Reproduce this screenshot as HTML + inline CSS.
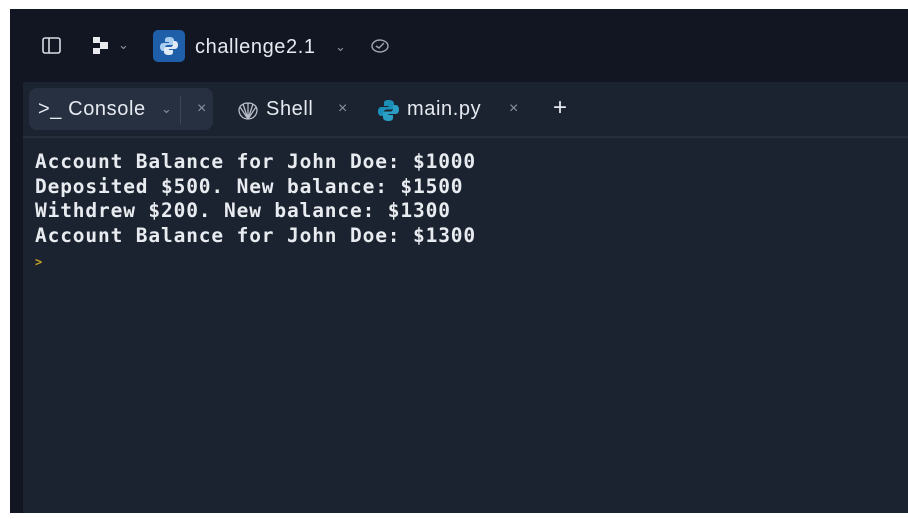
<!DOCTYPE html>
<html><head><style>
body{margin:0;width:908px;height:519px;background:#fff;overflow:hidden;position:relative;font-family:"Liberation Sans",sans-serif}
.app{position:absolute;left:10px;top:9px;width:898px;height:504px;background:#121622}
.top{position:absolute;left:0;top:0;width:898px;height:73px;background:#121622}
.main{position:absolute;left:13px;top:73px;right:0;bottom:0;background:#1b2330}
.tabs{position:absolute;left:0;top:0;right:0;height:54px;border-bottom:2px solid #262d3d}
.pill{position:absolute;left:6px;top:6px;width:184px;height:42px;background:#263041;border-radius:8px}
.t{position:absolute;color:#e6e9ef;font-size:20px;letter-spacing:0.6px}
.g{color:#8a93a3;letter-spacing:0}
pre{position:absolute;left:12px;top:68px;margin:0;font-family:"DejaVu Sans Mono",monospace;font-weight:bold;font-size:19.5px;line-height:24.5px;color:#e8ebef;letter-spacing:0.86px}
</style></head><body>
<div class="app">
 <div class="top">
  <svg style="position:absolute;left:32px;top:27px" width="20" height="20"><rect x="1" y="2" width="17" height="15" rx="2" fill="none" stroke="#d8dbe2" stroke-width="1.6"/><line x1="7" y1="2" x2="7" y2="17" stroke="#d8dbe2" stroke-width="1.6"/></svg>
  <svg style="position:absolute;left:82px;top:27px" width="20" height="20"><rect x="1" y="1" width="7" height="6" fill="#e8eaee"/><rect x="8" y="6" width="8" height="7" fill="#e8eaee"/><rect x="1" y="12" width="7" height="6" fill="#e8eaee"/></svg>
  <span class="t g" style="left:108px;top:28px;font-size:13px">⌄</span>
  <div style="position:absolute;left:143px;top:21px;width:32px;height:32px;background:#1f5ea8;border-radius:5px"></div>
  <svg style="position:absolute;left:149px;top:27px" width="20" height="20"><path d="M10 1c-4 0-4 2-4 3v2h4v1H4c-2 0-3 2-3 4s1 4 3 4h2v-3c0-2 1-3 3-3h4c1 0 2-1 2-2V4c0-2-2-3-5-3z" fill="#a9cdf0"/><path d="M10 19c4 0 4-2 4-3v-2h-4v-1h6c2 0 3-2 3-4s-1-4-3-4h-2v3c0 2-1 3-3 3H7c-1 0-2 1-2 2v3c0 2 2 3 5 3z" fill="#e1eaf4"/></svg>
  <span class="t" style="left:185px;top:27px">challenge2.1</span>
  <span class="t g" style="left:325px;top:30px;font-size:13px">⌄</span>
  <svg style="position:absolute;left:360px;top:29px" width="20" height="16"><ellipse cx="10" cy="8" rx="8" ry="6" fill="none" stroke="#a0a6b2" stroke-width="1.4"/><path d="M6 8l3 2 5-5" fill="none" stroke="#a0a6b2" stroke-width="1.4"/></svg>
 </div>
 <div class="main">
  <div class="tabs">
   <div class="pill"></div>
   <div style="position:absolute;left:157px;top:14px;width:1px;height:28px;background:#3b4556"></div>
   <span class="t" style="left:15px;top:16px">&gt;_ Console</span>
   <span class="t g" style="left:138px;top:19px;font-size:13px">⌄</span>
   <span class="t g" style="left:174px;top:18px;font-size:16px">×</span>
   <svg style="position:absolute;left:214px;top:18px" width="22" height="22"><path d="M11 19C4 19 2 13 2 10c0-4 4-7 9-7s9 3 9 7c0 3-2 9-9 9z M11 19L6 4 M11 19V3 M11 19L16 4 M11 19L3 7 M11 19L19 7" fill="none" stroke="#b9bec8" stroke-width="1.3"/></svg>
   <span class="t" style="left:243px;top:16px">Shell</span>
   <span class="t g" style="left:315px;top:18px;font-size:16px">×</span>
   <svg style="position:absolute;left:354px;top:17px" width="23" height="23"><path d="M11.5 1c-4.5 0-4.5 2-4.5 3.5v2.5h4.5v1H4.5C2 8 1 10 1 12.5S2 17 4.5 17H7v-3.5c0-2 1-3 3-3h4.5c1.2 0 2.5-1 2.5-2.5V4.5C17 2 14.5 1 11.5 1z" fill="#1b8fb8"/><path d="M11.5 22c4.5 0 4.5-2 4.5-3.5V16h-4.5v-1h7c2.5 0 3.5-2 3.5-4.5S21 6 18.5 6H16v3.5c0 2-1 3-3 3H8.5C7.2 12.5 6 13.5 6 15v3.5C6 21 8.5 22 11.5 22z" fill="#2a9ec4"/></svg>
   <span class="t" style="left:384px;top:16px">main.py</span>
   <span class="t g" style="left:486px;top:18px;font-size:16px">×</span>
   <span class="t" style="left:530px;top:12px;font-size:24px;font-weight:300">+</span>
  </div>
<pre>Account Balance for John Doe: $1000
Deposited $500. New balance: $1500
Withdrew $200. New balance: $1300
Account Balance for John Doe: $1300
<span style="color:#c9a227;font-size:12px">&gt;</span></pre>
 </div>
</div>
</body></html>
